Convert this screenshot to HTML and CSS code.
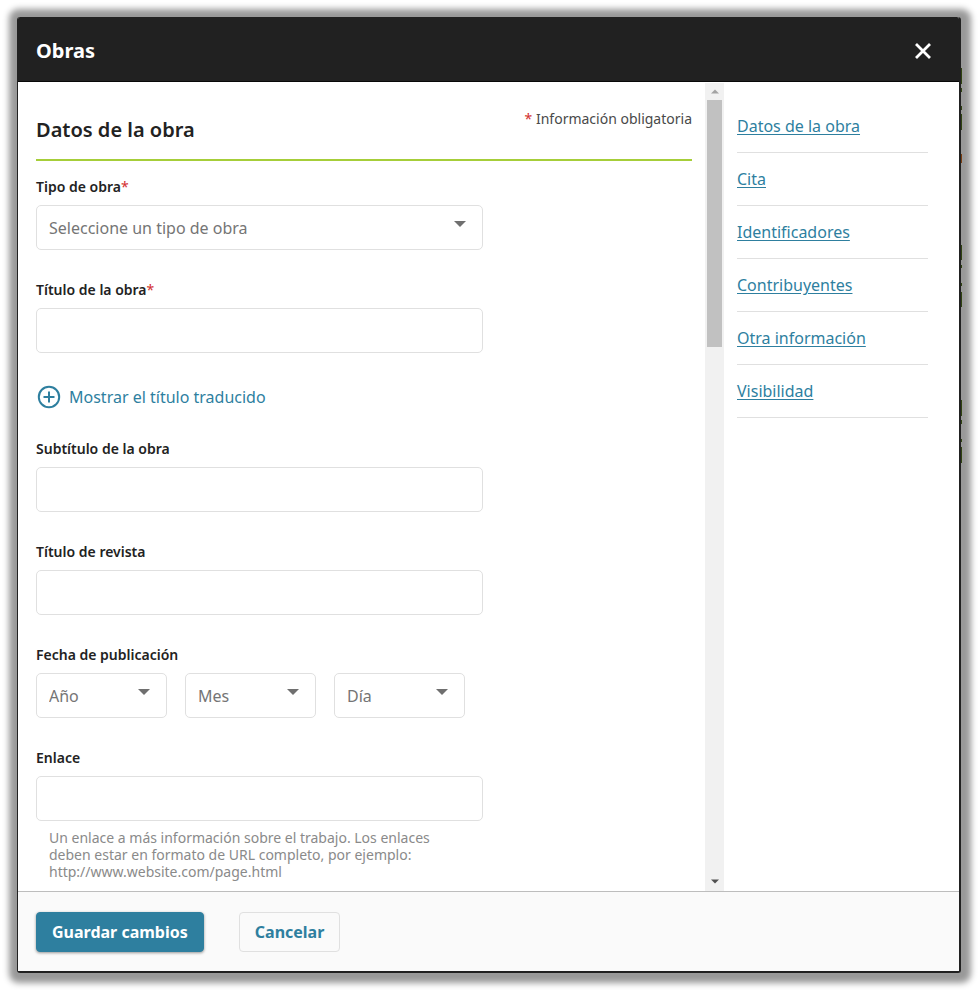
FILE: index.html
```html
<!DOCTYPE html>
<html lang="es">
<head>
<meta charset="utf-8">
<meta name="viewport" content="width=device-width, initial-scale=1">
<title>Obras</title>
<link rel="stylesheet" href="styles.css">
</head>
<body>
<section class="dialog" role="dialog" aria-labelledby="dialog-title">
  <header class="dialog-header">
    <h1 id="dialog-title">Obras</h1>
    <button class="close" type="button" aria-label="Cerrar">
      <svg viewBox="0 0 16 16" width="16" height="16"><path d="M1 1L15 15M15 1L1 15" fill="none" stroke="currentColor" stroke-width="2.8"/></svg>
    </button>
  </header>
  <div class="dialog-body">
    <form class="form" id="work-form">
      <div class="section-head">
        <h2 id="datos">Datos de la obra</h2>
        <p class="required-note"><span class="star">*</span> Información obligatoria</p>
      </div>
      <div class="field">
        <label for="tipo">Tipo de obra<span class="star">*</span></label>
        <div class="select">
          <select id="tipo"><option>Seleccione un tipo de obra</option></select>
          <svg class="arrow" viewBox="0 0 12 6" width="12" height="6"><path d="M0 0H12L6 6Z"/></svg>
        </div>
      </div>
      <div class="field">
        <label for="titulo">Título de la obra<span class="star">*</span></label>
        <input id="titulo" type="text">
      </div>
      <button class="toggle" type="button">
        <svg viewBox="0 0 24 24" width="24" height="24" fill="none" stroke="currentColor" stroke-width="2"><circle cx="12" cy="12" r="10.2"/><path d="M12 6.5V17.5M6.5 12H17.5"/></svg>
        Mostrar el título traducido
      </button>
      <div class="field">
        <label for="subtitulo">Subtítulo de la obra</label>
        <input id="subtitulo" type="text">
      </div>
      <div class="field">
        <label for="revista">Título de revista</label>
        <input id="revista" type="text">
      </div>
      <div class="field">
        <label for="anio">Fecha de publicación</label>
        <div class="dates">
          <div class="select">
            <select id="anio"><option>Año</option></select>
            <svg class="arrow" viewBox="0 0 12 6" width="12" height="6"><path d="M0 0H12L6 6Z"/></svg>
          </div>
          <div class="select">
            <select aria-label="Mes"><option>Mes</option></select>
            <svg class="arrow" viewBox="0 0 12 6" width="12" height="6"><path d="M0 0H12L6 6Z"/></svg>
          </div>
          <div class="select">
            <select aria-label="Día"><option>Día</option></select>
            <svg class="arrow" viewBox="0 0 12 6" width="12" height="6"><path d="M0 0H12L6 6Z"/></svg>
          </div>
        </div>
      </div>
      <div class="field">
        <label for="enlace">Enlace</label>
        <input id="enlace" type="url" aria-describedby="enlace-ayuda">
        <p class="hint" id="enlace-ayuda">Un enlace a más información sobre el trabajo. Los enlaces deben estar en formato de URL completo, por ejemplo: http://www.website.com/page.html</p>
      </div>
    </form>
    <div class="scrollbar" aria-hidden="true">
      <svg class="up" viewBox="0 0 8 4" width="8" height="5"><path d="M0 4L4 0L8 4Z"/></svg>
      <div class="track"><div class="thumb"></div></div>
      <svg class="down" viewBox="0 0 8 4" width="8" height="5"><path d="M0 0H8L4 4Z"/></svg>
    </div>
    <nav class="sections" aria-label="Secciones">
      <ul>
        <li><a href="#datos">Datos de la obra</a></li>
        <li><a href="#cita">Cita</a></li>
        <li><a href="#identificadores">Identificadores</a></li>
        <li><a href="#contribuyentes">Contribuyentes</a></li>
        <li><a href="#otra">Otra información</a></li>
        <li><a href="#visibilidad">Visibilidad</a></li>
      </ul>
    </nav>
  </div>
  <footer class="dialog-footer">
    <button class="btn primary" type="submit" form="work-form">Guardar cambios</button>
    <button class="btn" type="button">Cancelar</button>
  </footer>
</section>
</body>
</html>
```
FILE: styles.css
```css
* { box-sizing: border-box; }

body {
  margin: 0;
  padding: 17px 18px 18px 17px;
  background: #fff;
  color: #222;
  font: 16px/20px "Noto Sans", sans-serif;
}

h1, h2, p, ul { margin: 0; padding: 0; }
button, input, select { font: inherit; color: inherit; }

.dialog {
  position: relative;
  display: flex;
  flex-direction: column;
  min-height: calc(100vh - 35px);
  background: #fff;
  border: 1px solid #212121;
  border-width: 0 2px 2px 1px;
  border-radius: 3px;
  box-shadow: 1px 1px 6px 9px #999;
}

/* Edges of the page behind the dialog */
.dialog::after {
  content: "";
  position: absolute;
  top: 51px;
  left: calc(100% + 2px);
  width: 1px;
  height: 396px;
  background: linear-gradient(#2f4210 16px, transparent 16px 20px, #2f4210 20px 24px, transparent 24px 38px, #2f4210 38px 42px, transparent 42px 46px, #2f4210 46px 62px, transparent 62px 86px, #7a3d10 86px 95px, transparent 95px 177px, #2f4210 177px 192px, transparent 192px 197px, #2f4210 197px 200px, transparent 200px 215px, #2f4210 215px 218px, transparent 218px 224px, #2f4210 224px 239px, transparent 239px 332px, #2f4210 332px 348px, transparent 348px 352px, #2f4210 352px 356px, transparent 356px 371px, #2f4210 371px 374px, transparent 374px 379px, #2f4210 379px 395px, transparent 395px);
}

.dialog-header {
  display: flex;
  align-items: center;
  justify-content: space-between;
  height: 65px;
  padding: 4px 28px 0 18px;
  background: #212121;
  border-bottom: 1px solid #080808;
  border-radius: 2px 2px 0 0;
  color: #fff;
}

.dialog-header h1 { font-size: 20px; line-height: 28px; font-weight: 700; }

.close {
  display: flex;
  padding: 0;
  border: 0;
  background: none;
}

.dialog-body { display: flex; flex: 1; }

.form { flex: 1; padding: 26px 13px 9px 18px; }

.section-head {
  display: flex;
  justify-content: space-between;
  height: 53px;
  margin-bottom: 16px;
  border-bottom: 2px solid #a6ce39;
}

.section-head h2 { padding-top: 8px; font-size: 20px; line-height: 28px; font-weight: 600; }

.required-note { font-size: 14px; line-height: 22px; color: #494949; }

.star { color: #d32f2f; font-weight: 400; }

.field { max-width: 447px; margin-bottom: 30px; }
.field:last-child { margin-bottom: 0; }

.field label {
  display: block;
  margin-bottom: 8px;
  font-size: 14px;
  font-weight: 600;
}

.field input,
.select select {
  display: block;
  width: 100%;
  height: 45px;
  padding: 0 12px;
  border: 1px solid #e0e0e0;
  border-radius: 5px;
  background: #fff;
}

.select { position: relative; }
.select select { appearance: none; color: #757575; }

.arrow {
  position: absolute;
  top: 16px;
  right: 17px;
  fill: #6f6f6f;
  pointer-events: none;
}

.toggle {
  display: flex;
  align-items: center;
  gap: 8px;
  height: 28px;
  margin-bottom: 28px;
  padding: 0 1px;
  border: 0;
  background: none;
  color: #2e7f9f;
}

.dates { display: flex; gap: 18px; }
.dates .select { flex: 0 1 131px; }

.hint {
  padding: 8px 13px 0;
  font-size: 14px;
  line-height: 17px;
  color: #8a8a8a;
}

.scrollbar {
  display: flex;
  flex-direction: column;
  align-items: center;
  width: 19px;
  margin-top: 1px;
  padding: 6px 0 7px;
  background: #f1f1f1;
}

.track { flex: 1; align-self: stretch; padding: 6px 2px; }
.thumb { height: 32%; min-height: 247px; background: #c1c1c1; }
.up { fill: #a3a3a3; }
.down { fill: #505050; }

.sections { width: 235px; padding: 18px 31px 0 13px; }
.sections ul { list-style: none; }
.sections li { padding: 16px 0; border-bottom: 1px solid #e0e0e0; }
.sections a { color: #2e7f9f; text-underline-offset: 2px; }

.dialog-footer {
  display: flex;
  align-items: center;
  gap: 35px;
  height: 80px;
  padding: 0 18px;
  background: #fafafa;
  border-top: 1px solid #bdbdbd;
}

.btn {
  height: 40px;
  padding: 0 15px;
  border: 1px solid #e0e0e0;
  border-radius: 4px;
  background: #fafafa;
  color: #2e7f9f;
  font-weight: 700;
}

.btn.primary {
  border-color: #2e7f9f;
  background: #2e7f9f;
  box-shadow: 0 1px 3px rgba(0, 0, 0, 0.4);
  color: #fff;
}
```
